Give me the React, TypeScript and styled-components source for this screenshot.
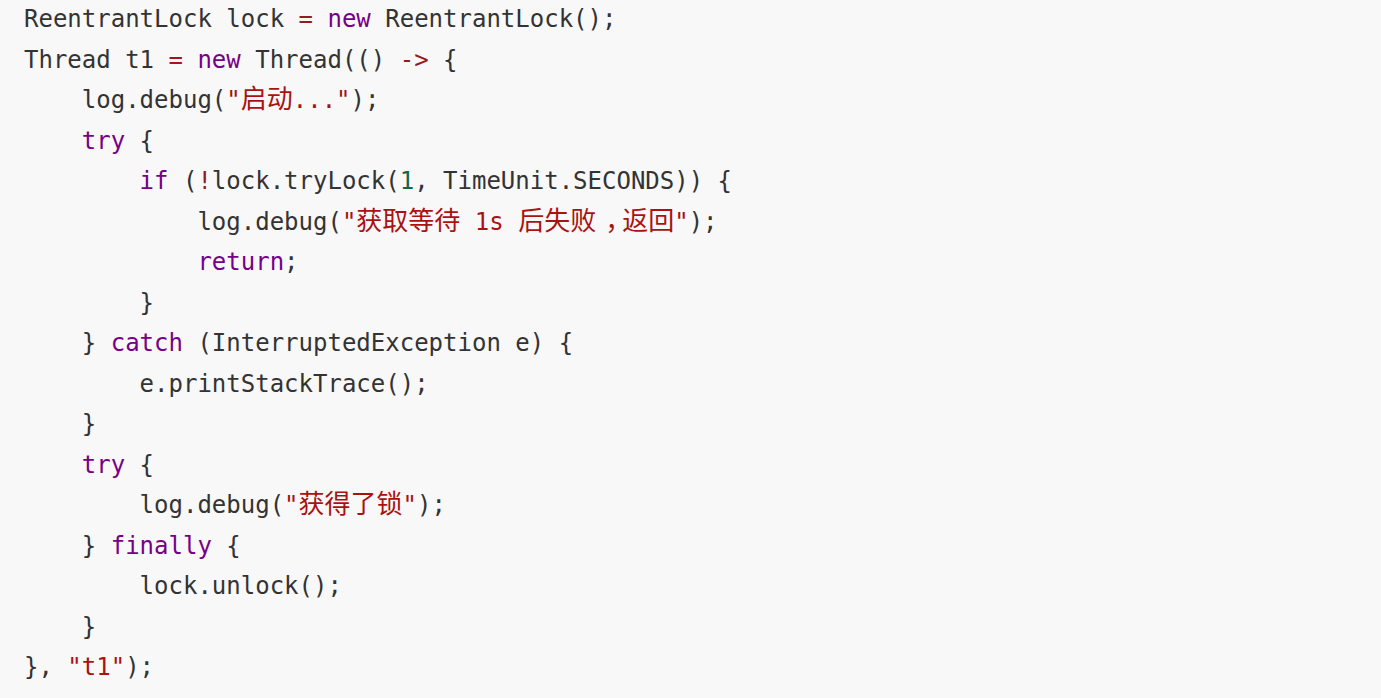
import React from "react";
import styled, { createGlobalStyle } from "styled-components";

const Global = createGlobalStyle`
  html, body { margin: 0; padding: 0; background: #f8f8f8; }
`;

type Kind = "p" | "k" | "s" | "o" | "n";

const colors: Record<Kind, string> = {
  p: "#333333",
  k: "#770088",
  s: "#aa1111",
  o: "#981a1a",
  n: "#116644",
};

const Code = styled.pre`
  margin: -1px 0 0 0;
  padding: 0 0 0 24px;
  background: #f8f8f8;
  font-family: "DejaVu Sans Mono", "Liberation Mono", "Noto Sans CJK SC", monospace;
  font-size: 24px;
  line-height: 40.5px;
  color: #333333;
  white-space: pre;
  min-height: 699px;
  box-sizing: border-box;
`;

const Line = styled.div`
  height: 40.5px;
`;

const Tok = styled.span<{ $k: Kind }>`
  color: ${(p) => colors[p.$k]};
`;

const Cjk = styled.span`
  font-family: "Noto Sans CJK SC", sans-serif;
  font-size: 26px;
  line-height: 0;
`;

const CjkPunct = styled(Cjk)`
  padding-left: 9px;
  letter-spacing: -9px;
`;

type T = [Kind, string];

const renderText = (s: string) => {
  const parts = s.split(/([\u3000-\u9fff\uff00-\uffef]+)/);
  return parts.flatMap((part, i) => {
    if (!/[\u3000-\u9fff\uff00-\uffef]/.test(part)) return [part];
    return part
      .split(/([\uff0c\u3002])/)
      .filter(Boolean)
      .map((seg, j) =>
        /[\uff0c\u3002]/.test(seg) ? (
          <CjkPunct key={`${i}-${j}`}>{seg}</CjkPunct>
        ) : (
          <Cjk key={`${i}-${j}`}>{seg}</Cjk>
        )
      );
  });
};

const lines: T[][] = [
  [["p", "ReentrantLock lock "], ["o", "="], ["p", " "], ["k", "new"], ["p", " ReentrantLock();"]],
  [["p", "Thread t1 "], ["o", "="], ["p", " "], ["k", "new"], ["p", " Thread(() "], ["o", "->"], ["p", " {"]],
  [["p", "    log.debug("], ["s", "\"启动...\""], ["p", ");"]],
  [["p", "    "], ["k", "try"], ["p", " {"]],
  [["p", "        "], ["k", "if"], ["p", " ("], ["o", "!"], ["p", "lock.tryLock("], ["n", "1"], ["p", ", TimeUnit.SECONDS)) {"]],
  [["p", "            log.debug("], ["s", "\"获取等待 1s 后失败，返回\""], ["p", ");"]],
  [["p", "            "], ["k", "return"], ["p", ";"]],
  [["p", "        }"]],
  [["p", "    } "], ["k", "catch"], ["p", " (InterruptedException e) {"]],
  [["p", "        e.printStackTrace();"]],
  [["p", "    }"]],
  [["p", "    "], ["k", "try"], ["p", " {"]],
  [["p", "        log.debug("], ["s", "\"获得了锁\""], ["p", ");"]],
  [["p", "    } "], ["k", "finally"], ["p", " {"]],
  [["p", "        lock.unlock();"]],
  [["p", "    }"]],
  [["p", "}, "], ["s", "\"t1\""], ["p", ");"]],
];

export default function App() {
  return (
    <>
      <Global />
      <Code>
        {lines.map((l, i) => (
          <Line key={i}>
            {l.map(([k, t], j) => (
              <Tok key={j} $k={k}>
                {renderText(t)}
              </Tok>
            ))}
          </Line>
        ))}
      </Code>
    </>
  );
}
